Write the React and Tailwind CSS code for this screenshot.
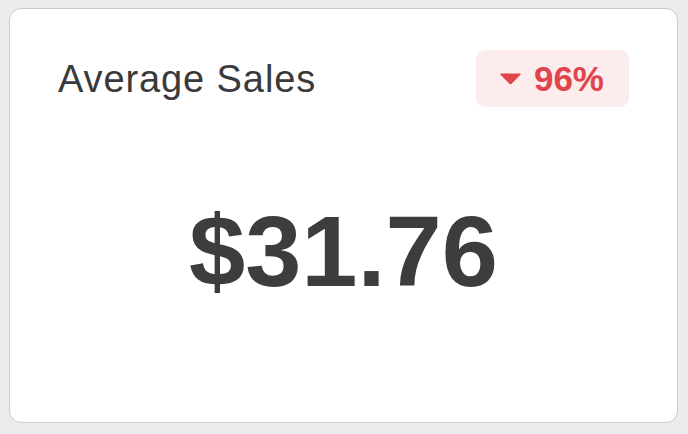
export default function App() {
  return (
    <div className="w-[688px] h-[434px] bg-[#ececee] p-[8px_10px_11px_9px] font-['Liberation_Sans',Arial,sans-serif]">
      <div className="h-full flex flex-col bg-white border border-[#c9cbce] rounded-[12px] px-12 pt-[41px]">
        {/* header */}
        <div className="flex items-center justify-between">
          <h2 className="text-[38px] tracking-[0.9px] leading-none text-[#3a3a3a]">Average Sales</h2>
          <div className="flex items-center gap-[12px] h-[57px] pl-[23px] pr-[25px] rounded-[9px] bg-[#fdecec] text-[#e0444c]">
            <svg width="23" height="12" viewBox="0 0 23 12">
              <path d="M1.5 1.8 Q0.8 0.5 2.4 0.5 L20.6 0.5 Q22.2 0.5 21.5 1.8 L12.6 10.8 Q11.5 11.8 10.4 10.8 Z" fill="currentColor" />
            </svg>
            <span className="text-[35px] font-bold leading-none">96%</span>
          </div>
        </div>

        {/* value */}
        <div className="flex-1 flex items-center justify-center pb-[26px]">
          <span className="text-[101px] font-bold leading-none text-[#3d3d3d]">$31.76</span>
        </div>
      </div>
    </div>
  );
}
